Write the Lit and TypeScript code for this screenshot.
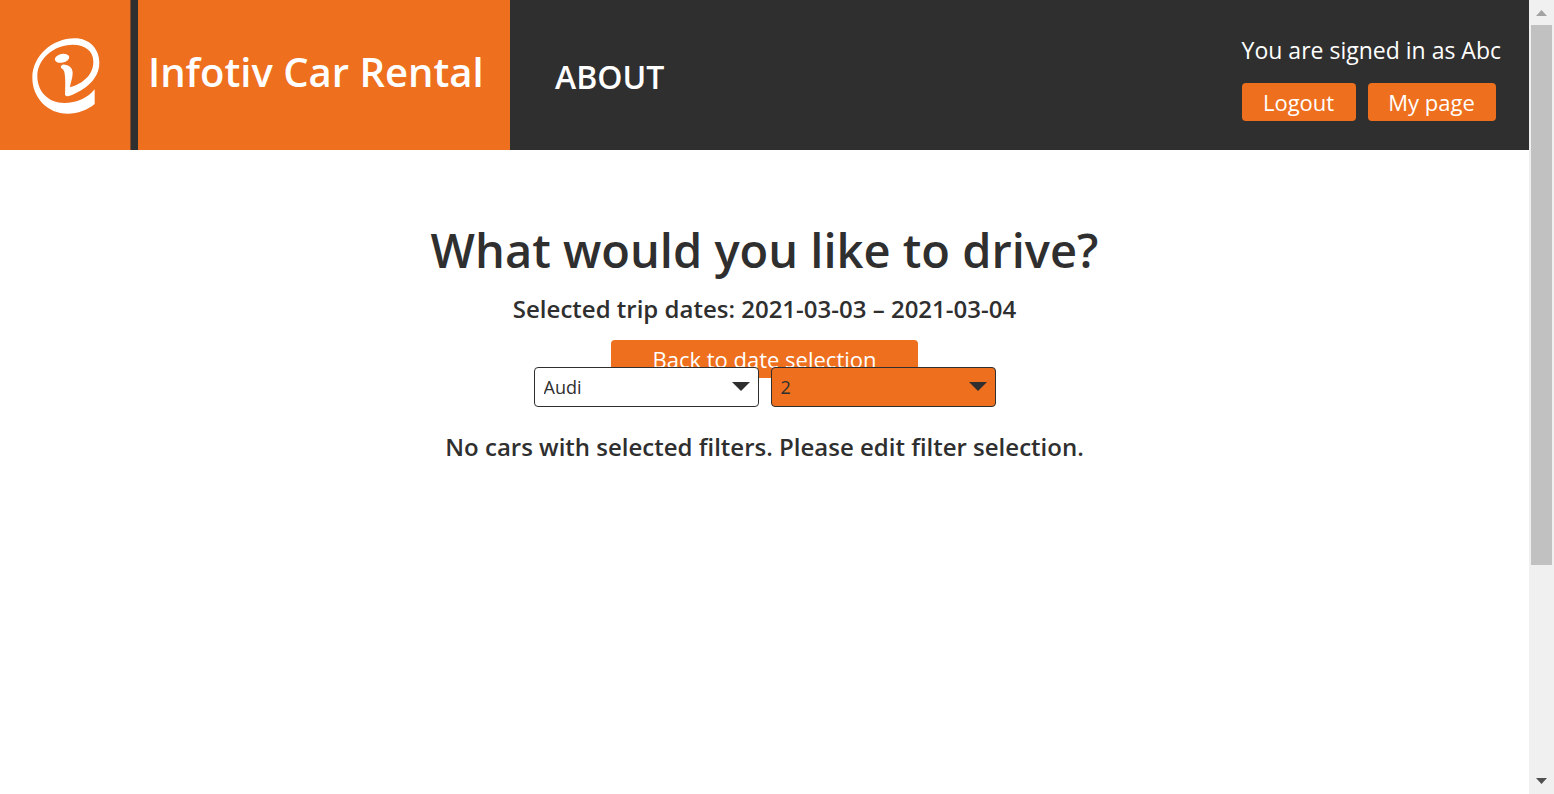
import { LitElement, html, css } from "lit";
import { customElement, state } from "lit/decorators.js";

@customElement("app-root")
export class AppRoot extends LitElement {
  @state() private user = "Abc";
  @state() private tripStart = "2021-03-03";
  @state() private tripEnd = "2021-03-04";

  static styles = css`
    :host {
      --orange: #ee6f1d;
      --dark: #2f2f2f;
      display: flex;
      height: 100vh;
      overflow: hidden;
      background: #fff;
      color: var(--dark);
      font-family: "Trebuchet MS", "Open Sans", sans-serif;
    }
    * {
      box-sizing: border-box;
    }
    .page {
      flex: 1;
      min-width: 0;
    }
    header {
      display: flex;
      height: 150px;
      background: var(--dark);
      color: #fff;
    }
    .logo {
      display: block;
      width: 131px;
      background: var(--orange);
      border-right: 1px solid #8a4a26;
    }
    .logo svg {
      display: block;
      width: 130px;
      height: 150px;
    }
    .brand {
      display: flex;
      align-items: center;
      width: 372px;
      margin-left: 7px;
      padding: 0 0 6px 10px;
      background: var(--orange);
    }
    .brand h1 {
      margin: 0;
      font-size: 40px;
      line-height: 48px;
      font-weight: 600;
      white-space: nowrap;
    }
    nav {
      display: flex;
      align-items: center;
      padding: 4px 0 0 45px;
    }
    nav a {
      color: #fff;
      text-decoration: none;
      font-size: 32px;
      line-height: 40px;
      font-weight: 600;
    }
    .account {
      margin-left: auto;
      padding: 34px 28px 0 0;
      font-size: 23px;
      line-height: 32px;
      white-space: nowrap;
    }
    .account p {
      margin: 0 0 17px;
    }
    .actions {
      display: flex;
      gap: 12px;
    }
    button {
      height: 38px;
      padding: 0;
      border: 0;
      border-radius: 4px;
      background: var(--orange);
      color: #fff;
      font: 22px/32px "Trebuchet MS", "Open Sans", sans-serif;
      cursor: pointer;
    }
    .logout {
      width: 114px;
    }
    .mypage {
      width: 128px;
    }
    main {
      display: flex;
      flex-direction: column;
      align-items: center;
      padding-top: 68px;
    }
    h2 {
      margin: 0;
      font-size: 47px;
      line-height: 64px;
      font-weight: 600;
    }
    .note {
      margin: 0;
      font-size: 24px;
      line-height: 32px;
      font-weight: 600;
    }
    .dates {
      margin: 11px 0 15px;
    }
    .back {
      width: 307px;
    }
    .filters {
      display: flex;
      gap: 12px;
      margin: -11px 0 24px;
      z-index: 1;
    }
    .field {
      display: grid;
      align-items: center;
      width: 225px;
    }
    .field > * {
      grid-area: 1 / 1;
    }
    .field svg {
      justify-self: end;
      width: 18px;
      height: 9px;
      margin: 0 9px 2px 0;
      fill: var(--dark);
      pointer-events: none;
      z-index: 1;
    }
    select {
      appearance: none;
      width: 100%;
      height: 40px;
      padding: 0 9px;
      border: 1px solid var(--dark);
      border-radius: 4px;
      background: #fff;
      color: var(--dark);
      font: 18px/32px "Trebuchet MS", "Open Sans", sans-serif;
    }
    .active {
      background: var(--orange);
    }
    .scrollbar {
      display: flex;
      flex-direction: column;
      align-items: center;
      width: 25px;
      background: #f0f0f0;
    }
    .scrollbar svg {
      width: 25px;
      height: 25px;
    }
    .track {
      flex: 1;
      width: 21px;
    }
    .thumb {
      height: 72.6%;
      background: #c1c1c1;
    }
  `;

  render() {
    return html`
      <div class="page">
        <header>
          <a class="logo" href="#" aria-label="Home">
            <svg viewBox="0 0 390 450" aria-hidden="true">
              <path
                fill="#fff"
                fill-rule="evenodd"
                d="M284 268V312C262 330 234 341 203 341C142 341 97 292 97 233C97 169 156 115 224 115C269 115 298 147 298 188C298 235 258 270 207 288Q198 290 195 284C196 263 197 235 193 216Q191 207 183 204C181 197 186 193 194 194C208 195 218 204 218 219C218 236 211 248 210 262C249 250 280 225 280 185C280 154 257 134 218 134C162 134 112 177 112 228C112 275 145 309 193 309C229 309 262 295 284 268Z"
              />
              <ellipse cx="186" cy="175" rx="22" ry="13" transform="rotate(-12 186 175)" fill="#fff" />
            </svg>
          </a>
          <div class="brand"><h1>Infotiv Car Rental</h1></div>
          <nav><a href="#about">ABOUT</a></nav>
          <div class="account">
            <p>You are signed in as ${this.user}</p>
            <div class="actions">
              <button class="logout">Logout</button>
              <button class="mypage">My page</button>
            </div>
          </div>
        </header>
        <main>
          <h2>What would you like to drive?</h2>
          <p class="note dates">Selected trip dates: ${this.tripStart} – ${this.tripEnd}</p>
          <button class="back">Back to date selection</button>
          <div class="filters">
            <div class="field">
              <select aria-label="Make">
                <option>Audi</option>
              </select>
              <svg viewBox="0 0 18 9" aria-hidden="true"><path d="M0 0H18L9 9Z" /></svg>
            </div>
            <div class="field">
              <select class="active" aria-label="Passengers">
                <option>2</option>
              </select>
              <svg viewBox="0 0 18 9" aria-hidden="true"><path d="M0 0H18L9 9Z" /></svg>
            </div>
          </div>
          <p class="note">No cars with selected filters. Please edit filter selection.</p>
        </main>
      </div>
      <div class="scrollbar" aria-hidden="true">
        <svg viewBox="0 0 25 25"><path fill="#a3a3a3" d="M7 16H18L12.500 10Z" /></svg>
        <div class="track"><div class="thumb"></div></div>
        <svg viewBox="0 0 25 25"><path fill="#505050" d="M7 9H18L12.500 15Z" /></svg>
      </div>
    `;
  }
}
